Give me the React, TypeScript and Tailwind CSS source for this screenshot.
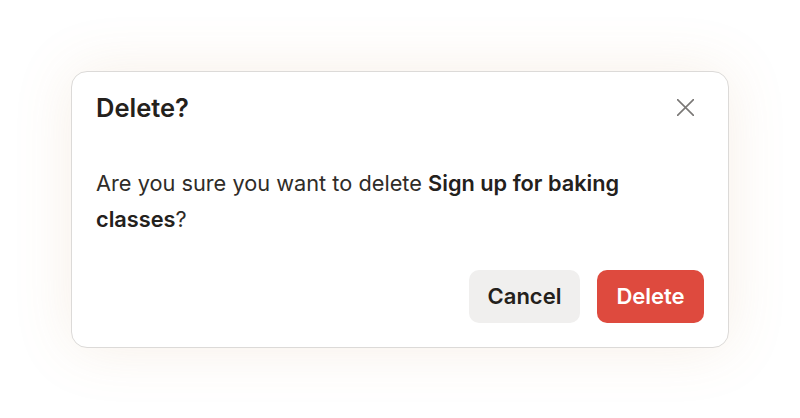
export default function App() {
  return (
    <div
      className="flex h-[418px] w-[800px] items-center justify-center bg-white"
      style={{ fontFamily: "Inter, 'Noto Sans', sans-serif" }}
    >
      <div className="flex w-[658px] flex-col rounded-[16px] border border-[#dcdad8] bg-white px-6 pb-6 pt-5 shadow-[0_0_60px_rgba(190,130,70,0.13)]">
        <div className="flex items-start justify-between">
          <h2 className="text-[25.5px] font-semibold leading-[32px] text-[#24211c]">
            Delete?
          </h2>
          <button type="button" className="mr-[10px] mt-[7px] text-[#7a7876]">
            <svg width="17" height="17" viewBox="0 0 17 17" fill="none">
              <path
                d="M0.5 0.5L16.5 16.5M16.5 0.5L0.5 16.5"
                stroke="currentColor"
                strokeWidth="1.6"
                strokeLinecap="round"
              />
            </svg>
          </button>
        </div>
        <p className="mt-[41px] max-w-[590px] text-[21.75px] leading-[36px] text-[#2f2c28]">
          Are you sure you want to delete{" "}
          <span className="font-semibold text-[#24211c]">
            Sign up for baking classes
          </span>
          ?
        </p>
        <div className="mt-[33px] flex justify-end gap-[17px]">
          <button
            type="button"
            className="h-[53px] w-[111px] rounded-[10px] bg-[#f0efee] text-[22px] font-semibold text-[#24211c]"
          >
            Cancel
          </button>
          <button
            type="button"
            className="h-[53px] w-[107px] rounded-[10px] bg-[#de4a3e] text-[22px] font-semibold text-white"
          >
            Delete
          </button>
        </div>
      </div>
    </div>
  );
}
